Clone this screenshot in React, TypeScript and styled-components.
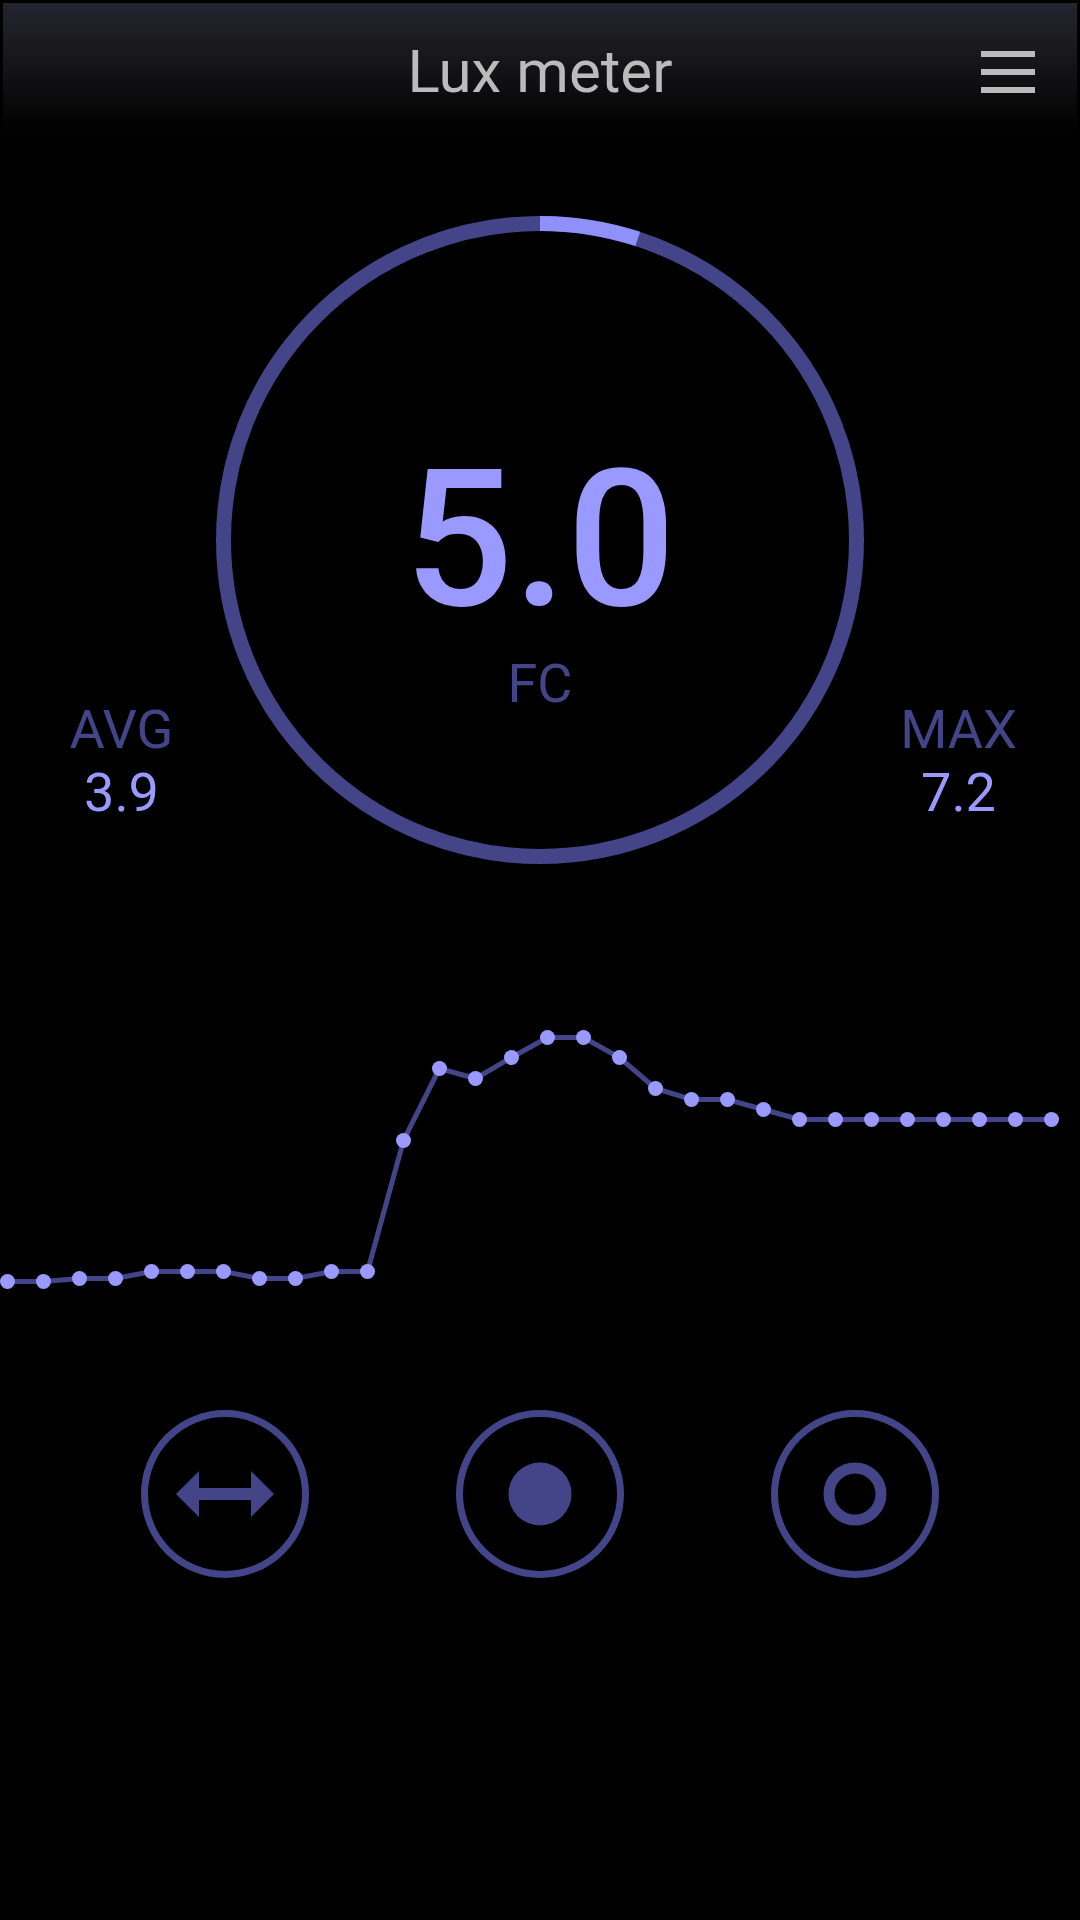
import React from "react";
import styled, { createGlobalStyle } from "styled-components";

const BRIGHT = "#9999ff";
const DIM = "#444488";

const GlobalStyle = createGlobalStyle`
  *, *::before, *::after {
    box-sizing: border-box;
  }
  body {
    margin: 0;
    background: #000;
    font-family: Roboto, "Liberation Sans", sans-serif;
  }
`;

const Screen = styled.div`
  display: flex;
  flex-direction: column;
  min-height: 100vh;
  overflow: hidden;
  background: #000;
`;

const Header = styled.header`
  display: grid;
  grid-template-columns: 1fr auto 1fr;
  align-items: center;
  height: 144px;
  padding: 0 42px;
  border: 3px solid #000;
  background: linear-gradient(
    #262629 0,
    #222230 6px,
    #1f2126 20px,
    #1a191d 46px,
    #121116 70px,
    #0a0a0b 98px,
    #030303 120px,
    #000 138px
  );
`;

const Title = styled.h1`
  grid-column: 2;
  margin: 0;
  color: #bbbbbb;
  font-size: 60px;
  font-weight: 400;
  line-height: 70px;
`;

const MenuButton = styled.button`
  display: flex;
  flex-direction: column;
  justify-self: end;
  gap: 12px;
  width: 54px;
  padding: 0;
  border: 0;
  background: none;
  cursor: pointer;
`;

const MenuBar = styled.span`
  height: 6px;
  background: #bbbbbb;
`;

const Gauge = styled.section`
  display: grid;
  grid-template-columns: 1fr 60% 1fr;
  margin-top: 72px;
`;

const Dial = styled.div`
  display: grid;
  grid-template-rows: 1fr auto 1fr;
  justify-items: center;
  grid-column: 2;
  grid-row: 1;
`;

const Ring = styled.svg`
  display: block;
  grid-column: 1;
  grid-row: 1 / -1;
  width: 100%;
`;

const Value = styled.output`
  grid-column: 1;
  grid-row: 2;
  color: ${BRIGHT};
  font-size: 192px;
  font-weight: 500;
  line-height: 224px;
`;

const Unit = styled.span`
  grid-column: 1;
  grid-row: 3;
  color: ${DIM};
  font-size: 54px;
  line-height: 63px;
`;

const Stat = styled.dl<{ $side: "left" | "right" }>`
  grid-column: ${(p) => (p.$side === "left" ? 1 : 3)};
  grid-row: 1;
  align-self: end;
  margin: 0;
  padding-bottom: 40px;
  padding-${(p) => p.$side}: 27px;
  font-size: 54px;
  line-height: 63px;
  text-align: center;
`;

const StatName = styled.dt`
  color: ${DIM};
`;

const StatValue = styled.dd`
  margin: 0;
  color: ${BRIGHT};
`;

const Chart = styled.svg`
  display: block;
  width: 100%;
  margin-top: 136px;
`;

const Controls = styled.nav`
  display: flex;
  justify-content: center;
  gap: 147px;
  margin-top: 110px;
`;

const RoundButton = styled.button`
  display: grid;
  place-items: center;
  width: 168px;
  height: 168px;
  padding: 0;
  border: 7px solid ${DIM};
  border-radius: 50%;
  background: none;
  color: ${DIM};
  cursor: pointer;
`;

const Glyph = styled.svg`
  display: block;
  width: 98px;
  height: 64px;
`;

// Plot heights of the samples, oldest first, measured from the chart's top edge.
const samples = [
  281, 281, 278, 278, 271, 271, 271, 278, 278, 271, 271, 140, 68, 78, 57, 37,
  37, 57, 88, 99, 99, 109, 119, 119, 119, 119, 119, 119, 119, 119,
];
const points = samples.map((y, i) => ({ x: 7.5 + i * 36, y: y + 0.5 }));

const RADIUS = 316.5;
const LENGTH = 2 * Math.PI * RADIUS;

function DialRing({ percent }: { percent: number }) {
  return (
    <Ring viewBox="0 0 648 648" aria-hidden="true">
      <g fill="none" strokeWidth="15" transform="rotate(-90 324 324)">
        <circle cx="324" cy="324" r={RADIUS} stroke={DIM} />
        <circle
          cx="324"
          cy="324"
          r={RADIUS}
          stroke="#9090fa"
          strokeDasharray={`${(LENGTH * percent) / 100} ${LENGTH}`}
        />
      </g>
    </Ring>
  );
}

export default function App() {
  return (
    <>
      <GlobalStyle />
      <Screen>
        <Header>
          <Title>Lux meter</Title>
          <MenuButton type="button" aria-label="Menu">
            <MenuBar />
            <MenuBar />
            <MenuBar />
          </MenuButton>
        </Header>

        <main>
          <Gauge>
            <Stat $side="left">
              <StatName>AVG</StatName>
              <StatValue>3.9</StatValue>
            </Stat>
            <Dial>
              <DialRing percent={5} />
              <Value>5.0</Value>
              <Unit>FC</Unit>
            </Dial>
            <Stat $side="right">
              <StatName>MAX</StatName>
              <StatValue>7.2</StatValue>
            </Stat>
          </Gauge>

          <Chart viewBox="0 0 1080 300" role="img" aria-label="Light level history">
            <polyline
              points={points.map((p) => `${p.x},${p.y}`).join(" ")}
              fill="none"
              stroke={DIM}
              strokeWidth="5"
            />
            {points.map((p) => (
              <circle key={p.x} cx={p.x} cy={p.y} r="7.5" fill={BRIGHT} />
            ))}
          </Chart>

          <Controls>
            <RoundButton type="button" aria-label="Range">
              <Glyph viewBox="0 0 98 64" fill="currentColor">
                <path d="M0 32 L23 9 V26 H75 V9 L98 32 L75 55 V38 H23 V55 Z" />
              </Glyph>
            </RoundButton>
            <RoundButton type="button" aria-label="Record">
              <Glyph viewBox="0 0 98 64" fill="currentColor">
                <circle cx="49" cy="32" r="31.5" />
              </Glyph>
            </RoundButton>
            <RoundButton type="button" aria-label="Reset">
              <Glyph viewBox="0 0 98 64" fill="none" stroke="currentColor">
                <circle cx="49" cy="32" r="26" strokeWidth="11" />
              </Glyph>
            </RoundButton>
          </Controls>
        </main>
      </Screen>
    </>
  );
}
